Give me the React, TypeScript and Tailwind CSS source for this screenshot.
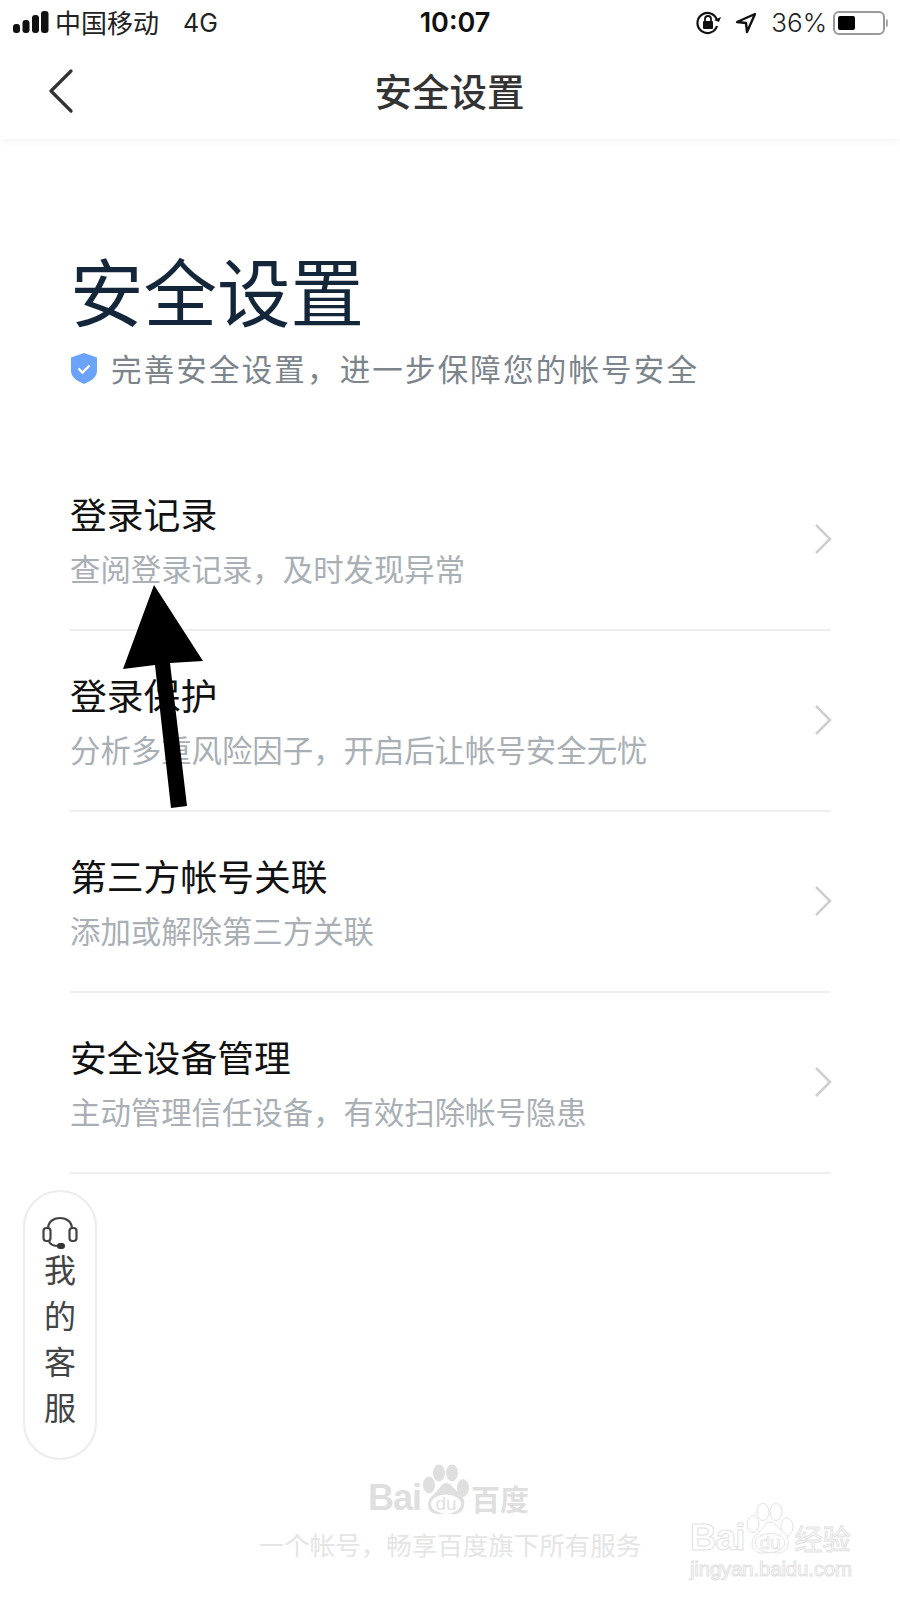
const rows = [
  { title: "登录记录", desc: "查阅登录记录，及时发现异常" },
  { title: "登录保护", desc: "分析多重风险因子，开启后让帐号安全无忧" },
  { title: "第三方帐号关联", desc: "添加或解除第三方关联" },
  { title: "安全设备管理", desc: "主动管理信任设备，有效扫除帐号隐患" },
];

const cjk = "font-['Noto_Sans_CJK_SC','Noto_Sans',sans-serif]";

const StatusBar = () => (
  <div className="grid h-[45px] grid-cols-3 items-center text-[26px] leading-none text-[#222]">
    <div className="flex items-center pl-[13px]">
      <svg width="36" height="24" viewBox="0 0 36 24" className="mr-[6px]">
        <rect x="0" y="13" width="7" height="9" rx="3" fill="#111" />
        <rect x="9.5" y="9" width="7" height="13" rx="3" fill="#111" />
        <rect x="19" y="4" width="7" height="18" rx="3" fill="#111" />
        <rect x="28" y="0" width="7.5" height="22" rx="3" fill="#111" />
      </svg>
      <span className={`${cjk} -mt-[2px]`}>中国移动</span>
      <span className="ml-[24px] mt-[2px] font-['Inter',sans-serif] text-[25px]">4G</span>
    </div>
    <div className="pl-[10px] text-center font-['Inter',sans-serif] text-[27px] font-semibold text-[#111]">10:07</div>
    <div className="flex items-center justify-end pr-[12px]">
      <svg width="26" height="26" viewBox="0 0 26 26" fill="none" className="mr-[14px]">
        <path d="M22 16a10 10 0 1 1 0-6" stroke="#111" strokeWidth="2.2" />
        <path d="M19 10l5 2 2-5z" fill="#111" />
        <rect x="8" y="11" width="10" height="8" rx="1" fill="#111" />
        <path d="M10 11V9a3 3 0 0 1 6 0v2" stroke="#111" strokeWidth="1.8" />
      </svg>
      <svg width="22" height="22" viewBox="0 0 22 22" fill="none" className="mr-[14px]">
        <path d="M20 2 2 10l9 1 1 9z" stroke="#111" strokeWidth="2.4" strokeLinejoin="round" />
      </svg>
      <span className="font-['Inter',sans-serif] text-[26px] font-light">36%</span>
      <div className="ml-[6px] flex h-[24px] w-[52px] items-center rounded-[6px] border-2 border-[#999] p-[3px]">
        <div className="h-full w-[17px] rounded-[2px] bg-black" />
      </div>
      <div className="ml-[1px] h-[8px] w-[2px] rounded-r bg-[#aaa]" />
    </div>
  </div>
);

const BaiduPaw = ({ outline }: { outline?: boolean }) => {
  const fill = outline ? "#fff" : "#dfdfdf";
  const stroke = outline ? "#e2e2e2" : "none";
  return (
    <svg width="50" height="52" viewBox="0 0 50 52" className="shrink-0">
      <ellipse cx="18" cy="9" rx="6" ry="8.5" fill={fill} stroke={stroke} />
      <ellipse cx="31" cy="9" rx="6" ry="8.5" fill={fill} stroke={stroke} />
      <ellipse cx="8" cy="21" rx="6" ry="8.5" fill={fill} stroke={stroke} />
      <ellipse cx="42" cy="24" rx="6" ry="9" fill={fill} stroke={stroke} />
      <path d="M25 19c5 0 7 5 12 9 6 5 7 9 6 14-1 6-7 9-12 8-4-1-7-1-11 0-6 1-13-2-13-9 0-6 4-9 8-13 4-3 5-9 10-9z" fill={fill} stroke={stroke} />
      <ellipse cx="25" cy="40" rx="15" ry="9.5" fill="#fff" stroke={outline ? "#e2e2e2" : "none"} />
      <text x="25" y="46" textAnchor="middle" fontSize="19" fontFamily="Liberation Sans, sans-serif" fill={outline ? "#fff" : "#dfdfdf"} stroke={outline ? "#e2e2e2" : "none"} strokeWidth="0.7">du</text>
    </svg>
  );
};

export default function App() {
  return (
    <div className={`relative flex h-[1600px] w-[900px] flex-col overflow-hidden bg-white ${cjk}`}>
      <div className="relative z-10 bg-white shadow-[0_2px_8px_rgba(0,0,0,0.05)]">
        <StatusBar />
        <div className="relative flex h-[94px] items-center justify-center pb-[4px]">
          <svg width="26" height="44" viewBox="0 0 26 44" fill="none" className="absolute left-[48px] top-[24px]">
            <path d="M23 2 3 22l20 20" stroke="#333" strokeWidth="3.2" strokeLinecap="round" strokeLinejoin="round" />
          </svg>
          <h1 className="-ml-[1px] text-[37.5px] font-medium leading-none text-[#333]">安全设置</h1>
        </div>
      </div>

      <div className="px-[70px] pt-[110px]">
        <h2 className="text-[73.5px] font-normal leading-[80px] text-[#14273a]">安全设置</h2>
        <div className="mt-[17px] flex items-center">
          <svg width="28" height="31" viewBox="0 0 28 31" className="mr-[13px] shrink-0">
            <path d="M14 0 27 4.5V18c0 6-6 10-13 13C7 28 1 24 1 18V4.5z" fill="#6ba3fb" />
            <path d="M8.5 15.5l4 4 7-7" fill="none" stroke="#fff" strokeWidth="2.4" />
          </svg>
          <span className="text-[30.5px] leading-[44px] tracking-[2.17px] text-[#7c848c]">完善安全设置，进一步保障您的帐号安全</span>
        </div>

        <div className="mt-[60px]">
          {rows.map((row) => (
            <div key={row.title} className="flex h-[181px] items-center justify-between border-b-2 border-[#eeeeee]">
              <div className="pt-[1px]">
                <div className="text-[36.8px] leading-[44px] text-[#111]">{row.title}</div>
                <div className="mt-[11px] text-[30.4px] leading-[44px] text-[#a8afb5]">{row.desc}</div>
              </div>
              <svg width="18" height="32" viewBox="0 0 18 32" fill="none" className="-mr-[2px] -mt-[1px]">
                <path d="M2 2l14 14L2 30" stroke="#cfcfcf" strokeWidth="2.6" />
              </svg>
            </div>
          ))}
        </div>
      </div>

      {/* floating button */}
      <div className="absolute left-[23px] top-[1190px] flex h-[270px] w-[74px] flex-col items-center rounded-[37px] border-2 border-[#ececec] bg-white pt-[24px] text-[32px] leading-[46px] text-[#444]">
        <svg width="36" height="34" viewBox="0 0 36 34" fill="none" className="-mb-[5px]">
          <path d="M6 13C6 6 11 2 18 2s12 4 12 11" stroke="#444" strokeWidth="2.2" />
          <rect x="1.5" y="12" width="7" height="13" rx="3" stroke="#444" strokeWidth="2.2" />
          <rect x="27.5" y="12" width="7" height="13" rx="3" stroke="#444" strokeWidth="2.2" />
          <path d="M7 25c1 4 6 5 10 5" stroke="#444" strokeWidth="2.2" />
          <rect x="15" y="27" width="8" height="6" rx="3" fill="#333" />
        </svg>
        <span>我</span>
        <span>的</span>
        <span>客</span>
        <span>服</span>
      </div>

      {/* footer */}
      <div className="mt-auto flex flex-col items-center pb-[40px] text-[#e5e5e5]">
        <div className="-ml-[3px] flex h-[52px] items-end leading-none text-[#dfdfdf]">
          <span className="font-['Liberation_Sans',sans-serif] text-[36px] font-bold leading-[36px] tracking-[-1px]">Bai</span>
          <BaiduPaw />
          <span className="text-[29px] font-bold leading-[36px]">百度</span>
        </div>
        <div className="mt-[12px] text-[25.5px] leading-[32px]">一个帐号，畅享百度旗下所有服务</div>
      </div>

      {/* watermark */}
      <div className="absolute left-[690px] top-[1503px] flex flex-col items-start text-transparent [-webkit-text-stroke:1px_#e2e2e2]">
        <div className="flex h-[52px] items-end leading-none">
          <span className="font-['Liberation_Sans',sans-serif] text-[37px] font-bold leading-[34px] tracking-[-1px]">Bai</span>
          <BaiduPaw outline />
          <span className="text-[28px] leading-[34px]">经验</span>
        </div>
        <div className="mt-[2px] font-['Liberation_Sans',sans-serif] text-[20.5px] leading-[24px] tracking-[-0.2px]">jingyan.baidu.com</div>
      </div>

      {/* annotation arrow */}
      <svg width="900" height="1600" viewBox="0 0 900 1600" className="pointer-events-none absolute left-0 top-0">
        <path d="M154 585 203 661 170 663 187 806 171 808 155 665 123 669z" fill="#000" />
      </svg>
    </div>
  );
}
